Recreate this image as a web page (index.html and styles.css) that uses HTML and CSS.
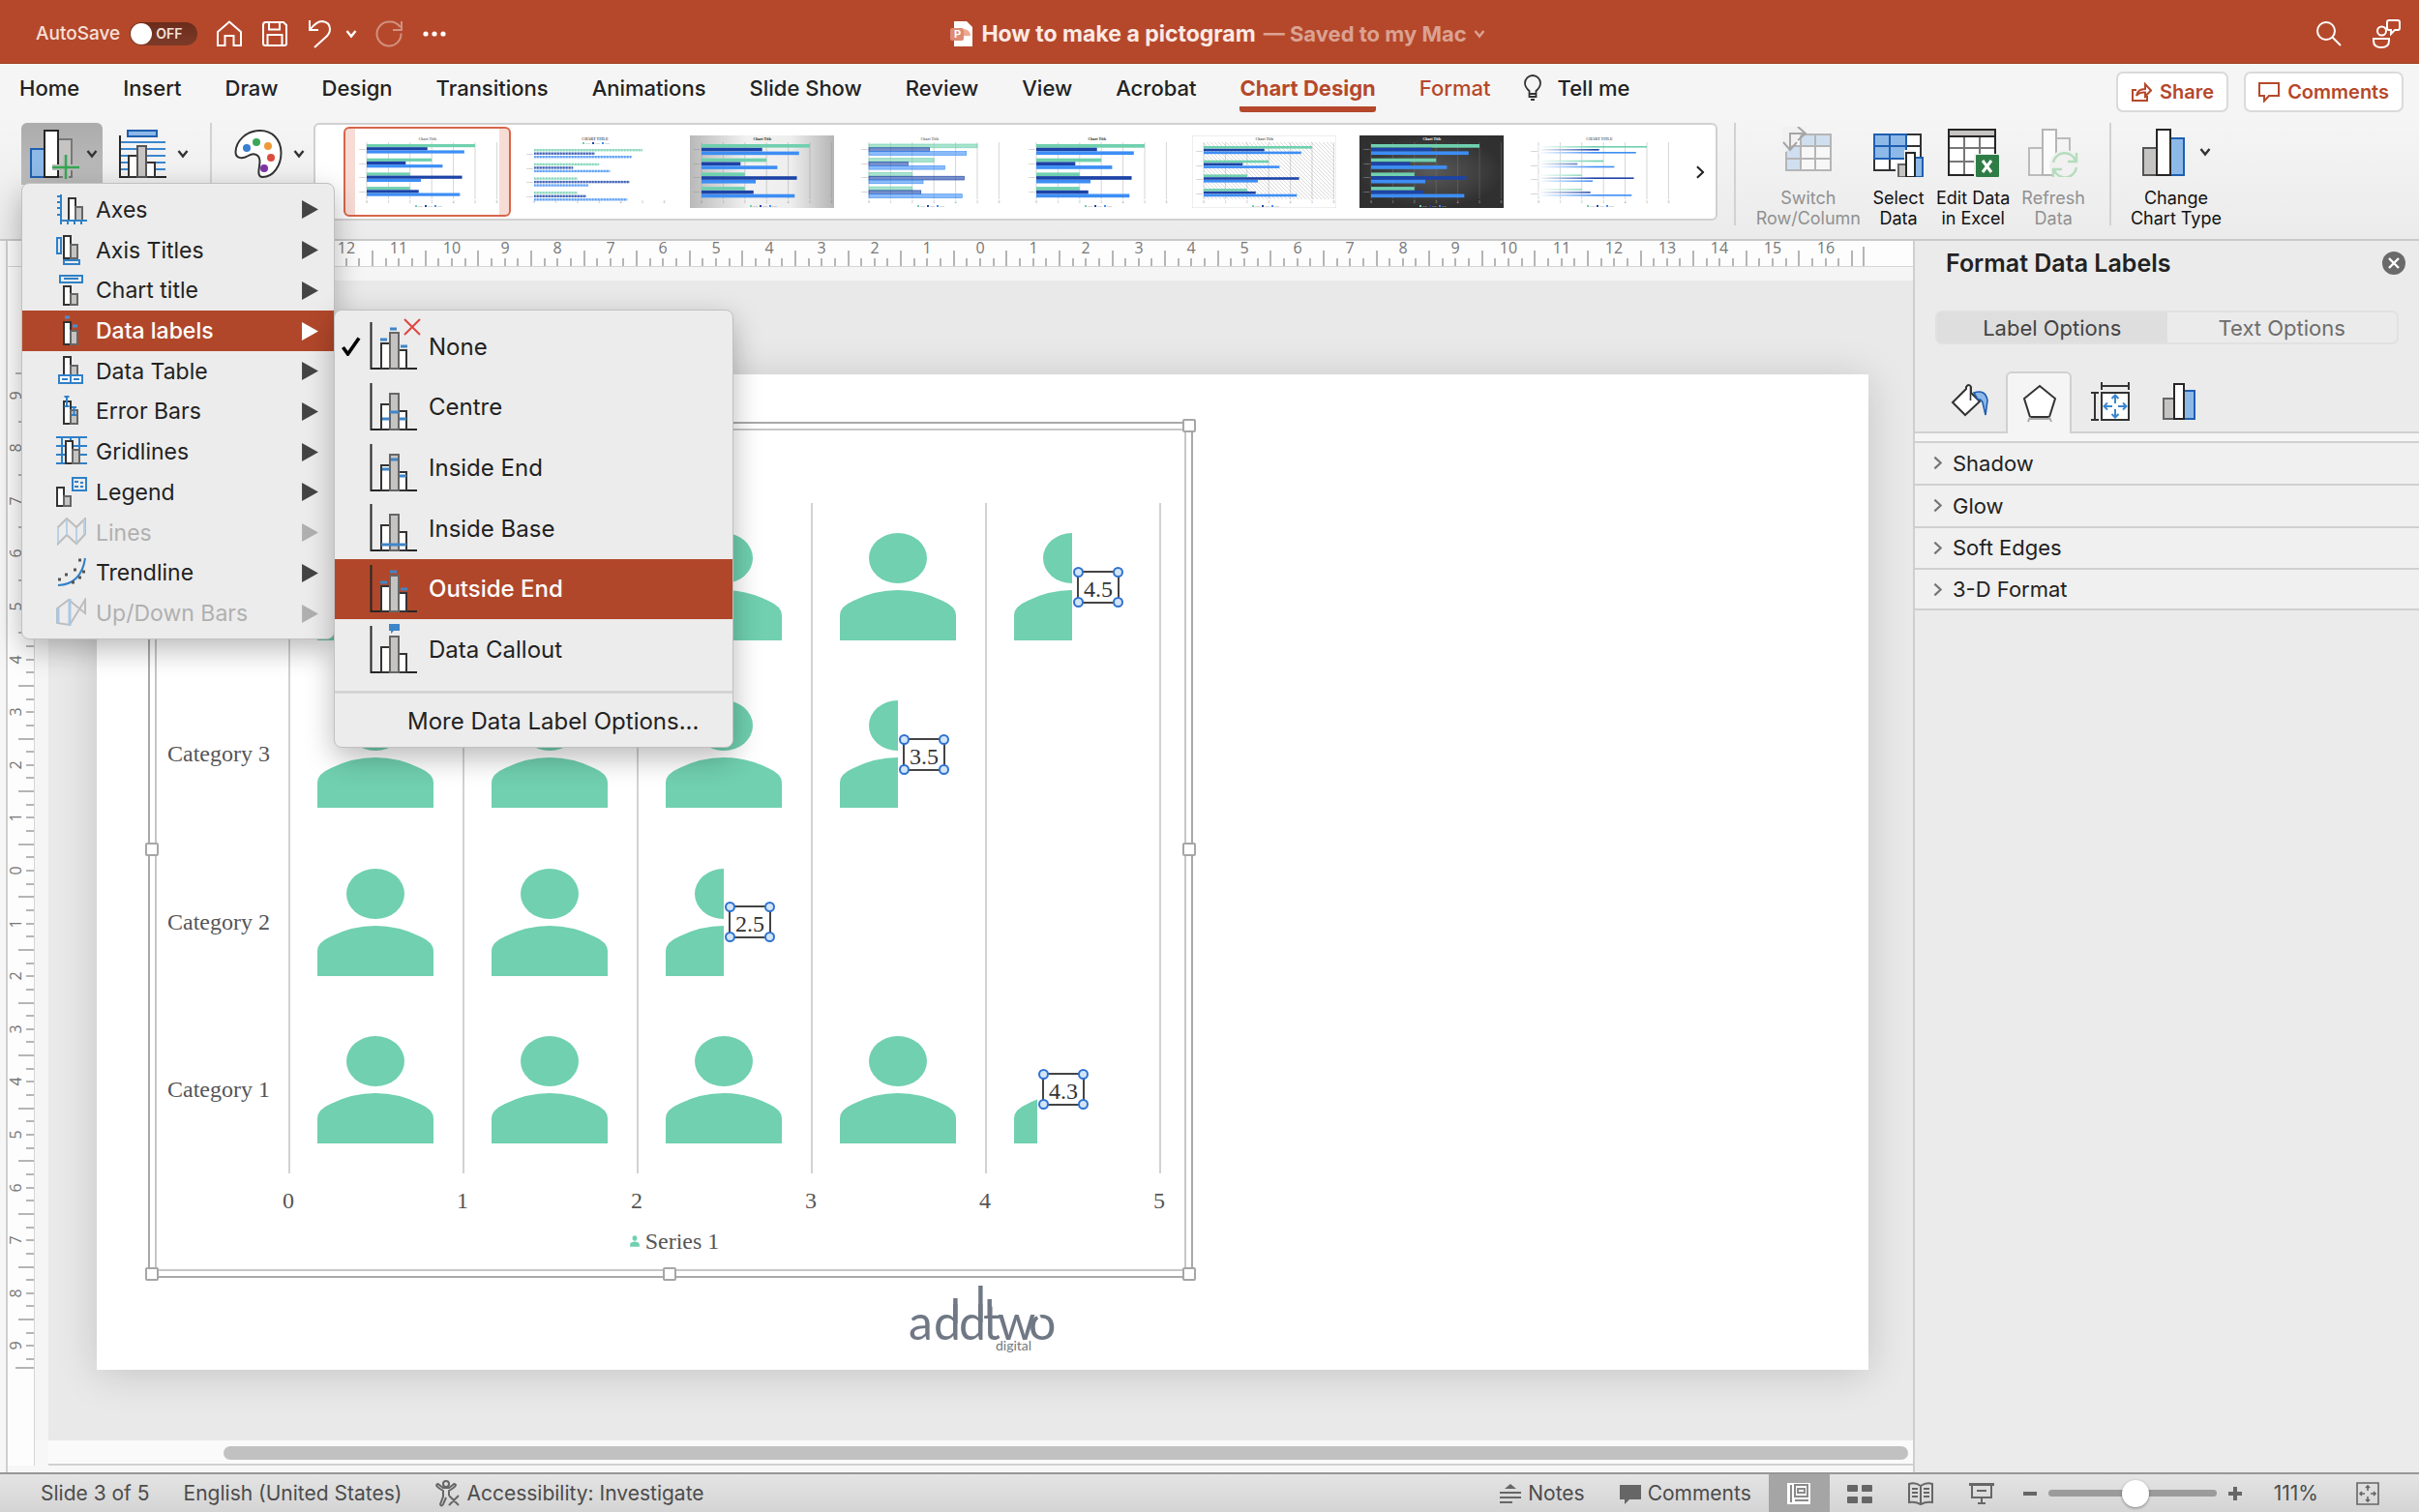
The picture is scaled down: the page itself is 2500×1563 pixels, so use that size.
FILE: index.html
```html
<!DOCTYPE html>
<html lang="en">
<head>
  <meta charset="UTF-8" />
  <meta name="viewport" content="width=device-width, initial-scale=1" />
  <title>How to make a pictogram</title>
  <link rel="stylesheet" href="styles.css">
</head>
<body>

  <!-- shared symbols -->
  <svg class="sprite" aria-hidden="true">
    <symbol id="chev" viewBox="0 0 12 10"><path d="M1.5 2l4.5 5.5L10.5 2" fill="none" stroke="currentColor" stroke-width="2.4"/></symbol>
    <symbol id="chev-right" viewBox="0 0 10 16"><path d="M1.5 1.5l7 6.500-7 6.500" fill="none" stroke="currentColor" stroke-width="2.4"/></symbol>
    <symbol id="tri" viewBox="0 0 16 18"><path d="M0 0l16 9-16 9z" fill="currentColor"/></symbol>
    <symbol id="bars" viewBox="0 0 54 54">
      <path d="M1.500 4v48H49" fill="none" stroke="#262626" stroke-width="2"/>
      <path d="M12 26h9v26h-9zM30 33h8v19h-8z" fill="#fff" stroke="#333" stroke-width="2"/>
      <path d="M21 15h9v37h-9z" fill="#c6c4c2" stroke="#666" stroke-width="2"/>
    </symbol>
    <symbol id="pair" viewBox="0 0 32 32">
      <path d="M8 7h7v23H8z" fill="#fff" stroke="#333" stroke-width="2"/>
      <path d="M15 16h7v14h-7z" fill="#c6c4c2" stroke="#666" stroke-width="2"/>
    </symbol>
  </svg>

  <header class="titlebar">
    <div class="quick">
      <label class="autosave" for="autosave">AutoSave
        <span class="switch"><input type="checkbox" id="autosave" /><span class="switch-text">OFF</span></span>
      </label>
      <button aria-label="Home"><svg width="28" height="28" viewBox="0 0 28 28"><path d="M2 12L14 1.500 26 12v14h-7.500V16h-9v10H2z"/></svg></button>
      <button aria-label="Save"><svg width="28" height="28" viewBox="0 0 28 28"><path d="M2 4.500Q2 2 4.500 2H23l3 3v19q0 2-2 2H4q-2 0-2-2zM8 2v7.500h11V2M6.500 26V15h15v11"/></svg></button>
      <button aria-label="Undo"><svg width="28" height="30" viewBox="0 0 28 30"><path d="M3 1v10h9M3 11Q10 2 16 2q8 1 8 8 0 5-5 9L8 29"/></svg></button>
      <button class="undo-more" aria-label="Undo history"><svg width="12" height="10"><use href="#chev"/></svg></button>
      <button class="faded" aria-label="Redo"><svg width="30" height="30" viewBox="0 0 30 30"><path d="M27 2v9h-9M26 8Q21 2 14.500 2.500a12.500 12.500 0 1 0 12 12"/></svg></button>
      <button aria-label="More commands"><svg width="26" height="8" viewBox="0 0 26 8"><g fill="#fff" stroke="none"><circle cx="3" cy="4" r="2.600"/><circle cx="12" cy="4" r="2.600"/><circle cx="21" cy="4" r="2.600"/></g></svg></button>
    </div>
    <div class="doc-title">
      <svg width="24" height="28" viewBox="0 0 24 28"><path d="M4 1h13l6 6v20H4z" fill="#fff"/><path d="M14 9v7h7q0-6-7-7z" fill="#efa892"/><rect x="0" y="8" width="14" height="13" rx="2" fill="#dd8b74"/><text x="4" y="18" class="doc-p">P</text></svg>
      <b>How to make a pictogram</b>
      <span class="saved">— Saved to my Mac <svg width="14" height="10"><use href="#chev"/></svg></span>
    </div>
    <div class="title-right">
      <button aria-label="Search"><svg width="28" height="28" viewBox="0 0 28 28"><circle cx="11" cy="11" r="9"/><path d="M17.500 17.500L26 26"/></svg></button>
      <button aria-label="Presence"><svg width="30" height="30" viewBox="0 0 30 30"><path d="M16 3q0-2 2-2h9q2 0 2 2v6q0 2-2 2h-3l-4 4v-4h-2q-2 0-2-2zM2 20h16v2q0 7-8 7t-8-7z"/><circle cx="10.500" cy="12" r="4.500"/></svg></button>
    </div>
  </header>

  <nav class="tabs">
    <button>Home</button>
    <button>Insert</button>
    <button>Draw</button>
    <button>Design</button>
    <button>Transitions</button>
    <button>Animations</button>
    <button>Slide Show</button>
    <button>Review</button>
    <button>View</button>
    <button>Acrobat</button>
    <button class="active">Chart Design</button>
    <button class="context">Format</button>
    <button class="tell"><svg width="20" height="28" viewBox="0 0 20 28"><path d="M6.500 20v-3Q2 13 2 9a8 8 0 0 1 16 0q0 4-4.500 8v3zM6.500 20v3h7v-3M8 26h4" fill="none" stroke="#333" stroke-width="1.800"/></svg>Tell me</button>
    <div class="tabs-right">
      <button class="pill"><svg width="22" height="22" viewBox="0 0 22 22"><path d="M6 9H2v11h15v-5M6 15q1-7 9-7V3l6 6.500-6 6v-4Q9 11 6 15z"/></svg>Share</button>
      <button class="pill"><svg width="22" height="22" viewBox="0 0 22 22"><path d="M1 2h20v13H11l-5 5.500V15H1z"/></svg>Comments</button>
    </div>
  </nav>

  <section class="ribbon">
    <div class="menu-anchor">
      <button class="tool pressed" aria-label="Add Chart Element">
        <svg width="52" height="52" viewBox="0 0 52 52">
          <path d="M2 21h14v29H2z" fill="#8db9e8" stroke="#1f5fb0" stroke-width="2"/>
          <path d="M30 11h14v39H30z" fill="#c6c4c2" stroke="#777" stroke-width="2"/>
          <path d="M16 2h14v48H16z" fill="#fff" stroke="#262626" stroke-width="2"/>
          <path d="M24 40h28M38 27v27" stroke="#bdbdbd" stroke-width="6"/>
          <path d="M24 40h28M38 27v27" stroke="#35a853" stroke-width="2.400"/>
        </svg>
        <svg class="chev" width="12" height="10"><use href="#chev"/></svg>
      </button>

      <div class="menu" role="menu">
        <button role="menuitem"><svg width="32" height="32"><use href="#pair" x="5" y="-3"/><path d="M5 0v27h27M1 2h4M1 8h4M1 14h4M1 21h4M5 27v4M12 27v4M19 27v4M26 27v4" class="blue"/></svg>Axes<svg class="arrow"><use href="#tri"/></svg></button>
        <button role="menuitem"><svg width="32" height="32"><use href="#pair" y="-6"/><path d="M1 3h4v16H1zM8 26h16v4H8z" class="blue"/></svg>Axis Titles<svg class="arrow"><use href="#tri"/></svg></button>
        <button role="menuitem"><svg width="32" height="32"><path d="M8 12h7v19H8z" fill="#fff" stroke="#333" stroke-width="2"/><path d="M15 20h7v11h-7z" fill="#c6c4c2" stroke="#666" stroke-width="2"/><path d="M4 1h23v7H4zM8 4h15" class="blue"/></svg>Chart title<svg class="arrow"><use href="#tri"/></svg></button>
        <button role="menuitem" class="selected"><svg width="32" height="32"><use href="#pair"/><path d="M9 2h5M17 11h5" stroke="#4a90d0" stroke-width="3"/></svg>Data labels<svg class="arrow"><use href="#tri"/></svg></button>
        <button role="menuitem"><svg width="32" height="32"><use href="#pair" y="-6"/><path d="M3 20h24v8H3zM15 20v8M6 24h6M18 24h6" class="blue filled"/></svg>Data Table<svg class="arrow"><use href="#tri"/></svg></button>
        <button role="menuitem"><svg width="32" height="32"><use href="#pair" y="-1"/><path d="M8.500 1h5M11 1v10M8.500 11h5M16 12h5M18.500 12v9M16 20h5" class="blue"/></svg>Error Bars<svg class="arrow"><use href="#tri"/></svg></button>
        <button role="menuitem"><svg width="32" height="32"><path d="M0 1h32M0 10h32M0 19h32M0 28h32M6 1v27M15 1v27M24 1v27" class="blue"/><use href="#pair" x="2" y="-2"/></svg>Gridlines<svg class="arrow"><use href="#tri"/></svg></button>
        <button role="menuitem"><svg width="32" height="32"><path d="M1 11h7v19H1z" fill="#fff" stroke="#333" stroke-width="2"/><path d="M8 20h7v10H8z" fill="#c6c4c2" stroke="#666" stroke-width="2"/><path d="M17 1h14v13H17zM19 5h4M25 6h3M19 10h4M25 10h3" class="blue"/></svg>Legend<svg class="arrow"><use href="#tri"/></svg></button>
        <button role="menuitem" disabled><svg width="32" height="32"><path d="M2 27V10l9-9 10 9 9-9v16l-9 10-10-9z" fill="none" stroke="#bdbdbd" stroke-width="2"/><path d="M2 10v16M11 2v16M21 11v15M29 2v15" fill="none" stroke="#b9d0e6" stroke-width="2"/></svg>Lines<svg class="arrow"><use href="#tri"/></svg></button>
        <button role="menuitem"><svg width="32" height="32"><path d="M2 29Q26 28 30 1" class="blue"/><path d="M2 23h3M9 18h3M16 26h3M18 13h3M23 21h3M27 15h3M23 3h3" stroke="#555" stroke-width="3"/></svg>Trendline<svg class="arrow"><use href="#tri"/></svg></button>
        <button role="menuitem" disabled><svg width="32" height="32"><path d="M1 11l12-9 17 14V2L14 28 1 26z" fill="none" stroke="#bdbdbd" stroke-width="2"/><path d="M2 11v15M14 1v28" stroke="#a9c7e4" stroke-width="3"/></svg>Up/Down Bars<svg class="arrow"><use href="#tri"/></svg></button>
      </div>

      <div class="submenu" role="menu">
        <button role="menuitemradio" aria-checked="true"><svg class="check" width="20" height="20" viewBox="0 0 20 20"><path d="M1.500 11l5 7L18 1.500" fill="none" stroke="#000" stroke-width="3.600"/></svg><svg class="bars" width="54" height="54"><use href="#bars"/><path d="M11 22h7M21 11h7M32 29h7" class="lab"/><path d="M36 1l16 16M52 1L36 17" stroke="#e0443e" stroke-width="2"/></svg>None</button>
        <button role="menuitemradio"><svg class="bars" width="54" height="54"><use href="#bars"/><path d="M13 41h7M21 34h9M31 41h7" class="lab"/></svg>Centre</button>
        <button role="menuitemradio"><svg class="bars" width="54" height="54"><use href="#bars"/><path d="M13 30h7M22 20h7M31 37h7" class="lab"/></svg>Inside End</button>
        <button role="menuitemradio"><svg class="bars" width="54" height="54"><use href="#bars"/><path d="M12 46h26" class="lab"/></svg>Inside Base</button>
        <button role="menuitemradio" class="selected"><svg class="bars" width="54" height="54"><use href="#bars"/><path d="M11 22h7M21 11h7M32 29h7" class="lab"/></svg>Outside End</button>
        <button role="menuitemradio"><svg class="bars" width="54" height="54"><use href="#bars"/><path d="M20 2h11v7h-6l-3 3V9h-2z" fill="#3f86c8"/></svg>Data Callout</button>
        <hr />
        <button role="menuitem" class="more">More Data Label Options...</button>
      </div>
    </div>

    <button class="tool" aria-label="Quick Layout">
      <svg width="50" height="52" viewBox="0 0 50 52">
        <path d="M10 2h30v6H10z" fill="#8db9e8" stroke="#1f5fb0" stroke-width="2"/>
        <path d="M2 14h47M2 21h47M2 28h47M2 35h47M2 42h47" stroke="#3a86d0" stroke-width="2"/>
        <path d="M2 7v43h48" fill="none" stroke="#262626" stroke-width="2"/>
        <path d="M11 28h9v22h-9zM29 35h9v15h-9z" fill="#fff" stroke="#333" stroke-width="2"/>
        <path d="M20 18h9v32h-9z" fill="#c6c4c2" stroke="#555" stroke-width="2"/>
      </svg>
      <svg class="chev" width="12" height="10"><use href="#chev"/></svg>
    </button>
    <span class="divider"></span>
    <button class="tool" aria-label="Change Colors">
      <svg width="50" height="52" viewBox="0 0 50 52">
        <path d="M27 2C12 2 2 13 1.500 24c0 8 8 7 13 4 6-4 12-1 12 6 0 6-4 16 3 16 11 0 19-12 19-25C48.500 11 39 2 27 2z" fill="#fff" stroke="#333" stroke-width="2"/>
        <circle cx="13" cy="20" r="4" fill="#3a7fd0"/><circle cx="23" cy="14" r="4" fill="#3aa757"/><circle cx="35" cy="18" r="4" fill="#ee9a3a"/><circle cx="38" cy="30" r="4" fill="#dd4b3e"/><circle cx="31" cy="41" r="4" fill="#7d35a8"/>
      </svg>
      <svg class="chev" width="12" height="10"><use href="#chev"/></svg>
    </button>

    <div class="gallery">
      <div class="thumbs" id="thumbs"></div>
      <button class="gallery-next" aria-label="More styles"><svg width="10" height="14" viewBox="0 0 10 16"><use href="#chev-right"/></svg></button>
    </div>

    <span class="divider"></span>
    <div class="commands">
      <button class="cmd" disabled>
        <svg width="54" height="52" viewBox="0 0 54 52"><path d="M4 8h46v37H4z" fill="#f7f7f7"/><path d="M20 8h30v12H20zM4 20h15v25H4z" fill="#cfdff0"/><path d="M4 8h46v37H4zM4 20h46M4 33h46M19 8v37M34 8v37" fill="none" stroke="#b5b5b5" stroke-width="2"/><path d="M-2 0h28L4 26H-2z" fill="#f1f1f1"/><path d="M8 24V7h16M16 0l8 7-8 7M1 16l7 8 7-8" fill="none" stroke="#a5a5a5" stroke-width="2"/></svg>
        Switch<br>Row/Column
      </button>
      <button class="cmd">
        <svg width="54" height="52" viewBox="0 0 54 52"><path d="M2 8h48v37H2z" fill="#fff"/><path d="M2 8h33v25H2z" fill="#8db9e8"/><path d="M2 8h48v37H2zM2 20h48M2 33h48M18 8v37M35 8v37" fill="none" stroke="#333" stroke-width="2"/><path d="M2 8h33v25H2zM2 20h33M18 8v25" fill="none" stroke="#1f5fb0" stroke-width="2"/><path d="M24 37h9V24h12v7h9v21H24z" fill="#f1f1f1"/><path d="M27 39h8v13h-8z" fill="#c6c4c2" stroke="#666" stroke-width="2"/><path d="M44 32h8v20h-8z" fill="#8db9e8" stroke="#1f5fb0" stroke-width="2"/><path d="M35 27h9v25h-9z" fill="#fff" stroke="#262626" stroke-width="2"/></svg>
        Select<br>Data
      </button>
      <button class="cmd">
        <svg width="54" height="52" viewBox="0 0 54 52"><path d="M2 3h48v47H2z" fill="#fff"/><path d="M2 3h48v7H2z" fill="#c6c4c2"/><path d="M2 22h48M2 36h48M18 10v40M34 10v40" stroke="#777" stroke-width="2"/><path d="M2 3h48v47H2zM2 10h48" fill="none" stroke="#262626" stroke-width="2"/><rect x="28" y="28" width="26" height="24" fill="#f1f1f1"/><rect x="30" y="29" width="24" height="23" rx="1" fill="#2f7d46"/><path d="M37 35l9 12M46 35l-9 12" stroke="#fff" stroke-width="3"/></svg>
        Edit Data<br>in Excel
      </button>
      <button class="cmd" disabled>
        <svg width="54" height="52" viewBox="0 0 54 52"><path d="M2 22h14v28H2zM30 12h14v38H30z" fill="#f4f4f4" stroke="#bbb" stroke-width="2"/><path d="M16 3h14v47H16z" fill="#fbfbfb" stroke="#b5b5b5" stroke-width="2"/><circle cx="39" cy="40" r="16" fill="#f1f1f1"/><path d="M27 37a12 12 0 0 1 23-2M51 27v9h-9M51 42a12 12 0 0 1-23 3M27 53v-9h9" fill="none" stroke="#b5dcbc" stroke-width="2.400"/></svg>
        Refresh<br>Data
      </button>
    </div>
    <span class="divider"></span>
    <button class="cmd change">
      <span class="with-chev"><svg width="46" height="52" viewBox="0 0 46 52"><path d="M2 22h14v28H2z" fill="#c6c4c2" stroke="#555" stroke-width="2"/><path d="M30 12h14v38H30z" fill="#8db9e8" stroke="#1f5fb0" stroke-width="2"/><path d="M16 3h14v47H16z" fill="#fff" stroke="#262626" stroke-width="2"/></svg><svg class="chev" width="12" height="10"><use href="#chev"/></svg></span>
      Change<br>Chart Type
    </button>
  </section>

  <main class="workspace">
    <div class="edge"></div>
    <section class="stage">
      <svg class="hruler" id="hruler"></svg>
      <svg class="vruler" id="vruler"></svg>
      <div class="canvas">
        <div class="slide">
          <div class="chart">
            <div class="chart-inner">
              <div class="plot" id="plot"></div>
              <div class="axis" id="axis"></div>
              <div class="legend"><svg width="10" height="12" viewBox="28 28 124 116" preserveAspectRatio="none"><use href="#person" width="180" height="173"/></svg>Series 1</div>
            </div>
            <i class="handle tl"></i><i class="handle tr"></i><i class="handle ml"></i><i class="handle mr"></i><i class="handle bl"></i><i class="handle bm"></i><i class="handle br"></i>
          </div>
          <svg class="logo" width="156" height="78" viewBox="0 0 156 78" fill="#6f7884">
            <text class="logo-word" y="57"><tspan x="1">a</tspan><tspan x="27">d</tspan><tspan x="53">d</tspan><tspan x="78">t</tspan><tspan x="93">w</tspan><tspan x="125">o</tspan></text>
            <rect x="47.200" y="14" width="4.400" height="26"/><rect x="73.200" y="1" width="4.400" height="38"/><rect x="82.500" y="15" width="4.400" height="20"/>
            <path d="M133 28l4 8" stroke="#fff" stroke-width="3"/>
            <text class="logo-sub" x="91" y="68">digital</text>
          </svg>
        </div>
      </div>
      <div class="scroll"><div class="scroll-thumb"></div></div>
    </section>

    <aside class="panel">
      <div class="panel-head">
        <h2>Format Data Labels</h2>
        <button class="close" aria-label="Close"><svg width="24" height="24" viewBox="0 0 24 24"><circle cx="12" cy="12" r="12" fill="#6a6a6a"/><path d="M7 7l10 10M17 7L7 17" stroke="#fff" stroke-width="2.400"/></svg></button>
      </div>
      <div class="segment"><button class="on">Label Options</button><button>Text Options</button></div>
      <div class="icon-tabs">
        <button aria-label="Fill and line"><svg width="40" height="40" viewBox="0 0 40 40"><path d="M2 21L16 7v-2q3-4 5 0v6l9 9-15 14z" fill="#fff" stroke="#333" stroke-width="2"/><path d="M20.500 5v14" stroke="#333" stroke-width="1.600"/><path d="M24 11q12-4 14 8l-2 15-3-13q-2-4-5-3z" fill="#8db9e8" stroke="#1f5fb0" stroke-width="1.600"/></svg></button>
        <button class="on" aria-label="Effects"><svg width="36" height="40" viewBox="0 0 36 40"><path d="M18 2l16 13-6 19H8L2 15z" fill="#fff" stroke="#333" stroke-width="2"/><path d="M8 34l-2 5M28 34l2 5M8 36h20" stroke="#aaa" stroke-width="2"/></svg></button>
        <button aria-label="Size and properties"><svg width="42" height="42" viewBox="0 0 42 42"><path d="M12 12h28v28H12z" fill="#fff" stroke="#333" stroke-width="2"/><path d="M12 1v8M40 1v8M12 5h28M1 12h8M1 40h8M5 12v28" fill="none" stroke="#333" stroke-width="2"/><path d="M26 23v-8M26 29v8M23 26h-8M29 26h8M22.500 18l3.500-3.500 3.500 3.500M22.500 34l3.500 3.500 3.500-3.500M18 22.500L14.500 26l3.500 3.500M34 22.500l3.500 3.500-3.500 3.500" fill="none" stroke="#3a86d0" stroke-width="2"/></svg></button>
        <button aria-label="Label options"><svg width="34" height="40" viewBox="0 0 34 40"><path d="M1 17h11v21H1z" fill="#c6c4c2" stroke="#666" stroke-width="2"/><path d="M22 9h11v29H22z" fill="#8db9e8" stroke="#1f5fb0" stroke-width="2"/><path d="M12 2h10v36H12z" fill="#fff" stroke="#262626" stroke-width="2"/></svg></button>
      </div>
      <div class="accordion">
        <button><svg width="9" height="15" viewBox="0 0 10 16"><use href="#chev-right"/></svg>Shadow</button>
        <button><svg width="9" height="15" viewBox="0 0 10 16"><use href="#chev-right"/></svg>Glow</button>
        <button><svg width="9" height="15" viewBox="0 0 10 16"><use href="#chev-right"/></svg>Soft Edges</button>
        <button><svg width="9" height="15" viewBox="0 0 10 16"><use href="#chev-right"/></svg>3-D Format</button>
      </div>
    </aside>
  </main>

  <footer class="status">
    <span class="slide-no">Slide 3 of 5</span>
    <button class="lang">English (United States)</button>
    <button class="acc"><svg width="26" height="28" viewBox="0 0 26 28"><circle cx="11" cy="4" r="3"/><path d="M1 5q1-2 3 0l4 3h6l4-3q2-2 3 0 0 2-7 6v5M1 5q0 2 7 6v6L5 25q1 3 3 0l3-7M14 16l10 10M24 16L14 26"/></svg>Accessibility: Investigate</button>
    <div class="status-right">
      <button class="notes"><svg width="24" height="24" viewBox="0 0 24 24"><path d="M12 2l6 5H6z" fill="#666" stroke="none"/><path d="M1 11h22M1 16h22M1 21h13"/></svg>Notes</button>
      <button class="coms"><svg width="24" height="24" viewBox="0 0 24 24"><path d="M1 3h22v15H11l-5 5v-5H1z" fill="#666" stroke="none"/></svg>Comments</button>
      <button class="view on" aria-label="Normal view"><svg width="26" height="26" viewBox="0 0 26 26"><path d="M1 2h24v22H1z" fill="#fff" stroke="none"/><path d="M5 4v18M9 4h13v12H9zM9 20h14" stroke="#8a8a8a"/><path d="M12 8h7v4h-7z" fill="#fff" stroke="#8a8a8a"/></svg></button>
      <button class="view" aria-label="Slide sorter"><svg width="26" height="22" viewBox="0 0 26 22"><g fill="#666" stroke="none"><rect x="0" y="2" width="11" height="7" rx="1"/><rect x="15" y="2" width="11" height="7" rx="1"/><rect x="0" y="14" width="11" height="7" rx="1"/><rect x="15" y="14" width="11" height="7" rx="1"/></g></svg></button>
      <button class="view" aria-label="Reading view"><svg width="26" height="24" viewBox="0 0 26 24"><path d="M13 4Q7 0 1 2v19q6-1 12 2 6-3 12-2V2q-6-2-12 2v18M4 7h6M4 11h6M4 15h6M16 7h6M16 11h6M16 15h6"/></svg></button>
      <button class="view" aria-label="Slide show"><svg width="26" height="24" viewBox="0 0 26 24"><path d="M0 2.500h26" stroke-width="3"/><path d="M3 3v13h20V3M8 9h10M13 16v6M9 22h8"/></svg></button>
      <div class="zoom">
        <button aria-label="Zoom out"><svg width="16" height="16"><path d="M1 8h14" stroke-width="4"/></svg></button>
        <input type="range" id="zoom" min="0" max="100" value="52" aria-label="Zoom" />
        <button aria-label="Zoom in"><svg width="16" height="16"><path d="M1 8h14M8 1v14" stroke-width="4"/></svg></button>
      </div>
      <span class="percent">111%</span>
      <button class="fit" aria-label="Fit slide"><svg width="24" height="24" viewBox="0 0 24 24"><path d="M1 1h22v22H1zM12 4v5M12 15v5M4 12h5M15 12h5M10 6l2-2 2 2M10 18l2 2 2-2M6 10l-2 2 2 2M18 10l2 2-2 2" stroke-width="1.600"/></svg></button>
    </div>
  </footer>

  <svg class="sprite" aria-hidden="true">
    <symbol id="person" viewBox="0 0 180 173" overflow="visible">
      <ellipse cx="90" cy="57" rx="30" ry="26"/>
      <path d="M30 142v-26Q30 107 44 101 66 90 90 90t46 11q14 6 14 15v26z"/>
    </symbol>
  </svg>

  <script>
    // ---- rulers, one unit is 54.6px ----
    const unit = 54.6;

    function ruler(el, zero, reach, end, vertical) {
      let out = '';
      for (let i = -reach * 4; i <= reach * 4; i++) {
        const p = zero + i * unit / 4;
        if (Math.abs(p - zero) > end) continue;
        const len = (Math.abs(i) % 4 === 2) ? 16 : 8;
        out += vertical
          ? `<path d="M${27 - len} ${Math.round(p)}h${len}"/>`
          : `<path d="M${Math.round(p)} ${26 - len}v${len}"/>`;
        if (i % 4 === 0) {
          const n = Math.abs(i / 4);
          out += vertical
            ? `<text transform="translate(14 ${Math.round(p)}) rotate(-90)">${n}</text>`
            : `<text x="${Math.round(p)}" y="13">${n}</text>`;
        }
      }
      [zero - end, zero + end].forEach(p => {
        out += vertical ? `<path d="M8 ${p}h26"/>` : `<path d="M${p} 6v26"/>`;
      });
      el.innerHTML = out;
    }
    ruler(document.getElementById('hruler'), 1005, 17, 913, false);
    ruler(document.getElementById('vruler'), 624, 10, 514, true);

    // ---- chart style gallery ----
    const values = [[5, 2.8, 4.5], [3, 1.8, 3.5], [2, 4.4, 2.5], [2, 2.4, 4.3]];
    const green = '#6fd0ae', navy = '#1c43a6', blue = '#3d8ef5';
    const styles = [
      { on: true, title: '#777', bar: 3.2 },
      { title: '#555', caps: true, bar: 2.4, gap: 1.1, top: 14, noGrid: true, stripes: true },
      { title: '#222', bar: 3.6, gap: 0.2, back: 'url(#g-grey)' },
      { title: '#777', bar: 3.8, fade: 0.6, outline: true },
      { title: '#222', bar: 3.7 },
      { title: '#666', bar: 2.6, gap: 0.2, top: 11, back: 'url(#g-hatch)', frame: true },
      { title: '#fff', bar: 3.7, back: 'url(#g-dark)' },
      { title: '#666', caps: true, bar: 1.6, gap: 1.4, top: 11, soft: true }
    ];

    function thumb(s) {
      const top = s.top || 9;
      const ink = s.title === '#fff' ? '#ddd' : '#777';
      let out = '';
      if (s.back) {
        out += s.frame
          ? `<rect width="149" height="75" fill="#fff" stroke="#ddd"/><rect x="12" y="7" width="135" height="59" fill="${s.back}"/>`
          : `<rect width="149" height="75" fill="${s.back}"/>`;
      }
      for (let i = 0; i <= 6 && !s.noGrid; i++) {
        out += `<path d="M${12 + i * 22.4} 7v59" stroke="#888" stroke-opacity=".35"/>`;
      }
      for (let i = 0; i <= 6; i++) {
        out += `<text x="${12 + i * 22.4}" y="70" font-size="3" fill="${ink}" text-anchor="middle">${i}</text>`;
      }
      values.forEach((set, g) => {
        out += `<text x="11" y="${top + 6 + g * 14.7}" font-size="2" fill="${ink}" text-anchor="end">Category</text>`;
        set.forEach((v, k) => {
          let color = [green, navy, blue][k];
          if (s.stripes) color = ['url(#s-green)', 'url(#s-navy)', 'url(#s-blue)'][k];
          if (s.soft) color = ['url(#f-green)', 'url(#f-navy)', 'url(#f-blue)'][k];
          const line = s.outline ? ` stroke="${color}" stroke-width=".6"` : '';
          const y = top + g * 14.7 + k * (s.bar + (s.gap || 0));
          out += `<rect x="12" y="${y}" width="${v * 22.4}" height="${s.bar}" fill="${color}" fill-opacity="${s.fade || 1}"${line}/>`;
        });
      });
      out += `<text x="75" y="5" font-size="4" fill="${s.title}" font-weight="bold" text-anchor="middle">${s.caps ? 'CHART TITLE' : 'Chart Title'}</text>`;
      const ly = s.noGrid ? 8 : 73;
      [green, navy, blue].forEach((c, i) => {
        out += `<rect x="${62 + i * 10}" y="${ly - 1}" width="2" height="2" fill="${c}"/><text x="${65 + i * 10}" y="${ly + 1}" font-size="2" fill="${ink}">Series</text>`;
      });
      return `<button class="thumb${s.on ? ' on' : ''}" aria-label="Chart style"><svg width="149" height="75" viewBox="0 0 149 75">${out}</svg></button>`;
    }

    const stripe = (id, c) => `<pattern id="s-${id}" width="3" height="3" patternUnits="userSpaceOnUse"><rect width="3" height="3" fill="${c}" opacity=".5"/><rect width="1.500" height="3" fill="${c}" opacity=".7"/></pattern>`;
    const soft = (id, c) => `<linearGradient id="f-${id}" gradientUnits="userSpaceOnUse" x1="12" x2="70"><stop stop-color="#fff"/><stop offset="1" stop-color="${c}"/></linearGradient>`;
    document.getElementById('thumbs').innerHTML =
      `<svg class="sprite"><defs>
        <linearGradient id="g-grey"><stop stop-color="#b9b9b9"/><stop offset=".4" stop-color="#f2f2f2"/><stop offset=".7" stop-color="#eee"/><stop offset="1" stop-color="#b5b5b5"/></linearGradient>
        <radialGradient id="g-dark"><stop stop-color="#5a5a5a"/><stop offset="1" stop-color="#303030"/></radialGradient>
        <pattern id="g-hatch" width="4" height="4" patternUnits="userSpaceOnUse"><path d="M0 0l4 4" stroke="#ccc" stroke-width=".7"/></pattern>
        ${stripe('green', green)}${stripe('navy', navy)}${stripe('blue', blue)}
        ${soft('green', green)}${soft('navy', navy)}${soft('blue', blue)}
      </defs></svg>` + styles.map(thumb).join('');

    // ---- pictogram ----
    const series = [
      { name: 'Category 4', value: 4.5 },
      { name: 'Category 3', value: 3.5 },
      { name: 'Category 2', value: 2.5 },
      { name: 'Category 1', value: 4.3 }
    ];
    const cell = 180;

    document.getElementById('plot').innerHTML = series.map(row => {
      let people = '';
      for (let i = 0; i < row.value; i++) {
        people += `<use href="#person" x="${i * cell}" width="180" height="173"/>`;
      }
      return `
        <div class="category">${row.name}</div>
        <div class="bar">
          <svg width="${row.value * cell}" height="173">${people}</svg>
          <div class="value">${row.value}<i></i><i></i><i></i><i></i></div>
        </div>`;
    }).join('');

    document.getElementById('axis').innerHTML = [0, 1, 2, 3, 4, 5].map(n => `<span>${n}</span>`).join('');
  </script>
</body>
</html>
```
FILE: styles.css
```css
* {
  box-sizing: border-box;
}
body {
  margin: 0;
  min-height: 100vh;
  display: flex;
  flex-direction: column;
  font-family: Inter, "Liberation Sans", sans-serif;
  font-size: 22px;
  color: #222;
  background: #ebebeb;
}
button {
  display: flex;
  align-items: center;
  padding: 0;
  border: none;
  background: none;
  font: inherit;
  color: inherit;
  white-space: nowrap;
}
svg {
  display: block;
  flex: none;
}
.sprite {
  position: absolute;
  width: 0;
  height: 0;
}
.chev {
  color: #333;
}

/* title bar */
.titlebar {
  display: grid;
  grid-template-columns: 1fr auto 1fr;
  align-items: center;
  height: 66px;
  padding: 4px 19px 0 37px;
  background: #b5482b;
  border-bottom: 1px solid #a13d22;
  color: #fff;
}
.titlebar button svg {
  fill: none;
  stroke: #fff;
  stroke-width: 2;
}
.quick {
  display: flex;
  align-items: center;
  gap: 19px;
}
.autosave {
  display: flex;
  align-items: center;
  gap: 10px;
  font-size: 19px;
  font-weight: 500;
  color: #f6e0da;
}
.switch {
  position: relative;
  display: flex;
}
.switch input {
  appearance: none;
  width: 70px;
  height: 24px;
  margin: 0;
  border-radius: 12px;
  background: linear-gradient(#6b2c1b, #7d3a29);
}
.switch input::before {
  content: "";
  display: block;
  width: 22px;
  height: 22px;
  margin: 1px;
  border-radius: 50%;
  background: #fff;
}
.switch-text {
  position: absolute;
  left: 27px;
  top: 4px;
  font-size: 14px;
  line-height: 16px;
  font-weight: 600;
}
.quick .undo-more {
  margin-left: -7px;
}
.quick .undo-more svg {
  stroke: none;
}
.faded {
  opacity: .4;
}
.doc-title {
  display: flex;
  align-items: center;
  gap: 8px;
  color: #fbeae5;
  font-size: 23px;
}
.doc-p {
  font: bold 11px Inter, sans-serif;
  fill: #fff;
}
.saved {
  display: flex;
  align-items: center;
  gap: 6px;
  font-size: 22px;
  font-weight: 700;
  color: #dba292;
}
.title-right {
  display: flex;
  justify-content: flex-end;
  gap: 30px;
}

/* tabs */
.tabs {
  display: flex;
  align-items: center;
  gap: 45px;
  height: 56px;
  padding: 0 16px 6px 20px;
  background: #f5f5f5;
  font-weight: 500;
}
.tabs .active {
  height: 50px;
  border-top: 6px solid transparent;
  border-bottom: 6px solid #b5482b;
  border-radius: 3px;
  color: #b5482b;
  font-weight: 700;
}
.context {
  color: #b5482b;
}
.tell {
  gap: 16px;
  margin-left: -12px;
}
.tabs-right {
  display: flex;
  gap: 16px;
  margin: 8px 0 0 auto;
}
.pill {
  gap: 8px;
  height: 42px;
  padding: 0 13px;
  border: 2px solid #dadada;
  border-radius: 7px;
  background: #fff;
  color: #b5482b;
  font-size: 20px;
  font-weight: 600;
}
.pill svg {
  fill: none;
  stroke: #b5482b;
  stroke-width: 2;
}

/* ribbon */
.ribbon {
  display: flex;
  align-items: flex-start;
  height: 127px;
  padding: 5px 0 0 22px;
  background: linear-gradient(#f5f5f5, #ebebeb);
  border-bottom: 2px solid #c9c9c9;
}
.tool {
  gap: 11px;
  height: 64px;
  padding: 0 0 0 16px;
}
.tool.pressed {
  width: 84px;
  gap: 7px;
  padding-left: 8px;
  border-radius: 6px 6px 0 0;
  background: linear-gradient(#acacac, #bdbdbd);
}
.divider {
  flex: none;
  width: 2px;
  height: 106px;
  background: #d2d2d2;
}
.tool + .divider {
  margin-left: 22px;
}
.divider + .tool {
  padding-left: 23px;
}
.gallery {
  display: flex;
  align-items: center;
  flex: 1;
  height: 101px;
  margin: 0 17px 0 9px;
  padding-left: 29px;
  border: 2px solid #d0d0d0;
  border-radius: 6px;
  background: #fff;
}
.thumbs {
  display: flex;
  justify-content: space-between;
  flex: 1;
  margin-right: 12px;
}
.thumb {
  justify-content: center;
  height: 93px;
  width: 149px;
  font-family: "Liberation Serif", serif;
}
.thumb.on {
  width: 173px;
  margin-right: -12px;
  border: 2px solid #d8654a;
  border-radius: 6px;
  background: #f7dcd5;
}
.thumb.on svg {
  height: 89px;
  padding: 7px 0;
  background: #fff;
}
.gallery-next {
  width: 34px;
  padding-left: 13px;
}
.commands {
  display: flex;
  gap: 12px;
  margin: 0 25px 0 21px;
}
.cmd {
  display: block;
  font-size: 18px;
  line-height: 21px;
  text-align: center;
  color: #111;
}
.cmd > svg,
.with-chev {
  margin: 4px auto 11px;
}
.cmd:disabled {
  color: #909090;
}
.change {
  margin: 0 204px 0 20px;
}
.with-chev {
  display: flex;
  align-items: center;
  justify-content: center;
  gap: 14px;
}

/* menus */
.menu-anchor {
  position: relative;
}
.menu,
.submenu {
  position: absolute;
  z-index: 5;
  display: grid;
  background: #ececec;
  border: 1px solid #c0c0c0;
  border-radius: 8px;
  box-shadow: 0 10px 30px rgba(0, 0, 0, .28);
}
.menu {
  left: 0;
  top: 62px;
  width: 324px;
  height: 472px;
  padding: 6px 0 5px;
  grid-template-rows: repeat(11, 1fr);
  font-size: 23px;
}
.menu button {
  gap: 9px;
  padding: 0 16px 0 35px;
}
.arrow {
  width: 17px;
  height: 19px;
  margin-left: auto;
  color: #444;
}
.blue {
  fill: none;
  stroke: #2f80c8;
  stroke-width: 2;
}
.blue.filled {
  fill: #fff;
}
.menu .selected,
.submenu .selected {
  background: #b1472a;
  color: #fff;
  font-weight: 500;
}
.menu .selected .arrow {
  color: #fff;
}
.menu button:disabled,
.menu button:disabled .arrow {
  color: #b0b0b0;
}
.submenu {
  left: 323px;
  top: 193px;
  width: 413px;
  height: 453px;
  padding: 6px 0 9px;
  grid-template-rows: repeat(6, 1fr) 24px 36px;
  font-size: 24px;
}
.submenu button {
  position: relative;
  gap: 7px;
  padding-left: 36px;
}
.submenu .check {
  position: absolute;
  left: 7px;
}
.submenu .bars {
  margin-bottom: 4px;
}
.lab {
  stroke: #3f86c8;
  stroke-width: 3;
}
.submenu hr {
  align-self: center;
  width: 100%;
  margin: 0;
  border: none;
  border-top: 3px solid #d4d4d4;
}
.submenu .more {
  padding-left: 75px;
}

/* workspace */
.workspace {
  display: flex;
  flex: 1;
}
.edge {
  width: 8px;
  border-right: 2px solid #cfcfcf;
  background: #f6f6f6;
}
.stage {
  display: grid;
  grid-template-columns: 28px 1fr;
  grid-template-rows: 27px 1fr 26px;
  flex: 1;
  min-width: 0;
  padding-bottom: 7px;
  background: #f7f7f7;
}
.hruler,
.vruler {
  background: #fdfdfd;
  stroke: #b5b5b5;
  stroke-width: 2;
  overflow: hidden;
}
.hruler text,
.vruler text {
  font-family: "Open Sans", "Noto Sans", sans-serif;
  font-size: 16px;
  stroke: none;
  fill: #777;
  text-anchor: middle;
}
.hruler {
  grid-column: 1 / 3;
  width: 100%;
  height: 27px;
  border-bottom: 1px solid #d5d5d5;
}
.vruler {
  grid-row: 2 / 4;
  width: 28px;
  height: 100%;
  border-right: 1px solid #d5d5d5;
}
.canvas {
  display: flex;
  align-items: flex-start;
  padding: 97px 46px 0 50px;
  border-top: 14px solid #f5f5f5;
  border-left: 14px solid #f5f5f5;
  background: #e9e9e9;
}
.slide {
  position: relative;
  flex: 1;
  height: 1029px;
  background: #fff;
  box-shadow: 0 4px 40px rgba(0, 0, 0, .16);
}
.scroll {
  margin-left: 14px;
  padding: 6px 5px 0 181px;
  background: #fafafa;
  border-bottom: 2px solid #d0d0d0;
}
.scroll-thumb {
  height: 14px;
  border-radius: 7px;
  background: #c1c1c1;
}

/* chart on the slide */
.chart {
  position: absolute;
  left: 53px;
  top: 49px;
  width: 1080px;
  height: 885px;
  padding: 5px;
  border: 2px solid #a9a9a9;
  color: #555;
  font-family: Georgia, "Liberation Serif", serif;
  font-size: 24px;
}
.chart-inner {
  height: 100%;
  padding-top: 75px;
  border: 2px solid #c6c6c6;
}
.plot {
  display: grid;
  grid-template-columns: 117px 902px;
  column-gap: 19px;
  height: 693px;
  grid-template-rows: repeat(4, 1fr);
  align-items: center;
}
.category {
  text-align: right;
}
.bar {
  display: flex;
  align-items: center;
  height: 100%;
  background: repeating-linear-gradient(to right, #d2d2d2 0 2px, transparent 2px 180px);
}
.bar svg {
  fill: #70d0b0;
}
.value {
  position: relative;
  width: 44px;
  height: 34px;
  margin-left: 5px;
  border: 2px solid #444;
  line-height: 34px;
  text-align: center;
  color: #333;
}
.value i {
  position: absolute;
  width: 11px;
  height: 11px;
  border: 2px solid #2f73d0;
  border-radius: 50%;
  background: #d3e5f8;
}
.value i:nth-child(odd) {
  left: -6px;
}
.value i:nth-child(even) {
  right: -6px;
}
.value i:nth-child(-n+2) {
  top: -6px;
}
.value i:nth-child(n+3) {
  bottom: -6px;
}
.axis {
  display: grid;
  grid-template-columns: repeat(6, 180px);
  margin: 14px 0 0 46px;
  line-height: 28px;
  text-align: center;
}
.legend {
  display: flex;
  align-items: center;
  justify-content: center;
  gap: 6px;
  margin-top: 14px;
  padding-left: 8px;
  line-height: 28px;
}
.legend svg {
  fill: #70d0b0;
}
.handle {
  position: absolute;
  width: 14px;
  height: 14px;
  border: 2px solid #a6a6a6;
  border-radius: 2px;
  background: #fff;
}
.tl, .tr {
  top: -5px;
}
.ml, .mr {
  top: 433px;
}
.bl, .bm, .br {
  bottom: -5px;
}
.tl, .ml, .bl {
  left: -5px;
}
.tr, .mr, .br {
  right: -5px;
}
.bm {
  left: 530px;
}
.logo {
  position: absolute;
  left: 838px;
  top: 941px;
}
.logo-word {
  font-family: Lato, sans-serif;
  font-size: 50px;
}
.logo-sub {
  font-family: Lato, sans-serif;
  font-size: 14px;
}

/* format panel */
.panel {
  width: 523px;
  border-left: 2px solid #cfcfcf;
  background: #ebebeb;
}
.panel-head {
  display: flex;
  align-items: center;
  justify-content: space-between;
  height: 46px;
  padding: 0 14px 0 32px;
}
.panel h2 {
  margin: 0;
  font-size: 25px;
  font-weight: 600;
}
.segment {
  display: flex;
  height: 35px;
  margin: 26px 21px 28px 21px;
  border: 2px solid #e1e1e1;
  border-radius: 7px;
  color: #6d6d6d;
}
.segment button {
  flex: 1;
  justify-content: center;
}
.segment .on {
  background: #dedede;
  color: #444;
}
.icon-tabs {
  display: flex;
  height: 64px;
  padding-left: 22px;
  border-bottom: 2px solid #d0d0d0;
}
.icon-tabs button {
  width: 72px;
  padding: 0 0 0 15px;
}
.icon-tabs .on {
  width: 68px;
  height: 64px;
  border: 2px solid #d0d0d0;
  border-bottom: none;
  border-radius: 6px 6px 0 0;
  background: #f5f5f5;
}
.icon-tabs .on ~ button {
  width: 75px;
  padding-left: 19px;
}
.accordion {
  display: grid;
  grid-template-rows: repeat(4, 1fr);
  height: 183px;
  padding-top: 8px;
  background: #f5f5f5;
}
.accordion button {
  gap: 11px;
  padding-left: 19px;
  border-top: 2px solid #d0d0d0;
  background: #f0f0f0;
}
.accordion button:last-child {
  border-bottom: 2px solid #d0d0d0;
}
.accordion svg {
  color: #777;
}

/* status bar */
.status {
  display: flex;
  align-items: center;
  height: 41px;
  padding-left: 42px;
  border-top: 2px solid #979797;
  background: linear-gradient(#e4e4e4, #d4d4d4);
  font-size: 21px;
  color: #4c4c4c;
}
.status svg {
  fill: none;
  stroke: #666;
  stroke-width: 2;
}
.lang {
  margin: 0 35px;
}
.acc {
  gap: 6px;
}
.status-right {
  display: flex;
  align-items: center;
  height: 100%;
  margin-left: auto;
}
.notes,
.coms {
  gap: 6px;
  margin-right: 35px;
}
.coms {
  margin-right: 18px;
}
.view {
  justify-content: center;
  width: 63px;
  height: 100%;
}
.view.on {
  background: #a5a5a5;
}
.zoom {
  display: flex;
  align-items: center;
  gap: 11px;
  margin: 0 32px 0 10px;
}
.zoom input {
  appearance: none;
  width: 174px;
  height: 7px;
  margin: 0;
  border-radius: 4px;
  background: #9b9b9b;
}
.zoom input::-webkit-slider-thumb {
  appearance: none;
  width: 28px;
  height: 28px;
  border-radius: 50%;
  background: #fff;
  box-shadow: 0 1px 3px rgba(0, 0, 0, .4);
}
.fit {
  margin: 0 41px 0 39px;
}
```
